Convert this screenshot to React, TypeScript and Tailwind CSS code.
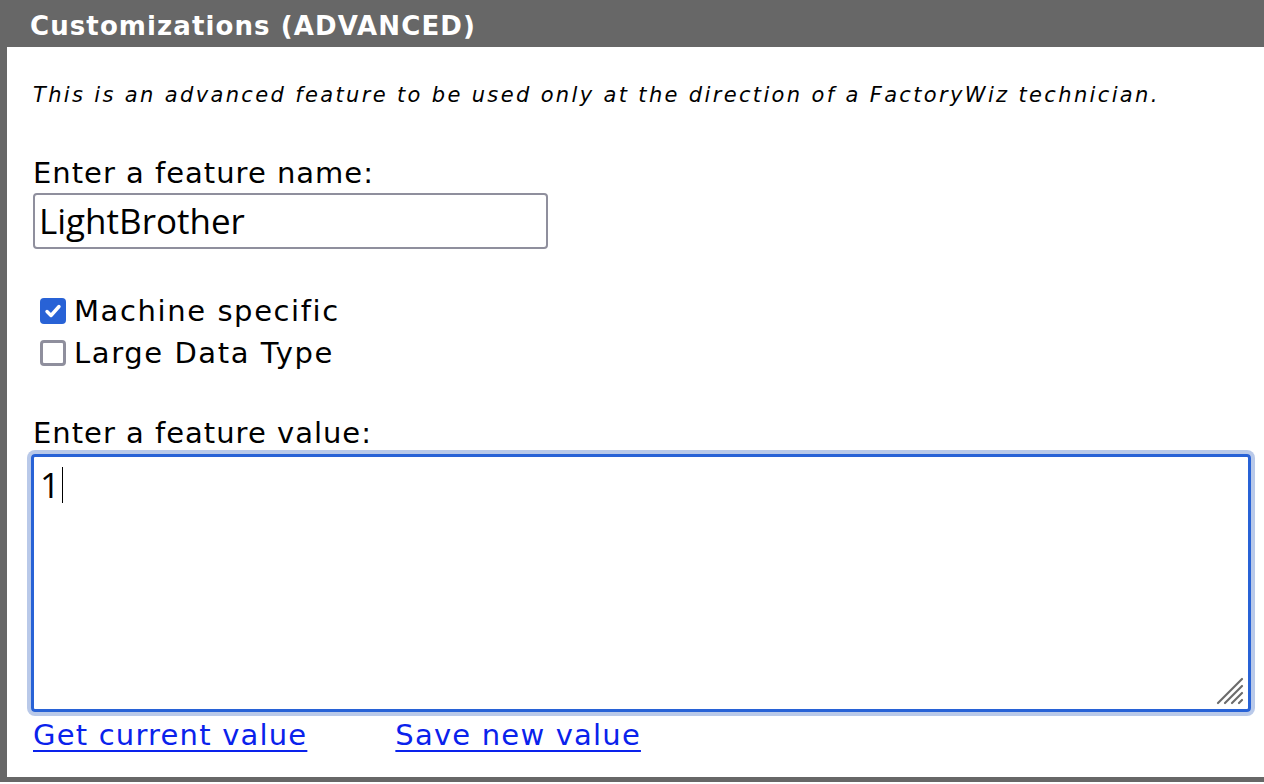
import React from "react";

const gothic = { fontFamily: '"DejaVu Sans", "Liberation Sans", sans-serif' };
const field = { fontFamily: '"Open Sans", "Noto Sans", sans-serif' };

function CheckRow({ checked, label }: { checked: boolean; label: string }) {
  return (
    <div className="flex h-[42px] items-center pl-[7px]">
      {checked ? (
        <div className="flex h-[26px] w-[26px] items-center justify-center rounded-[4px] bg-[#2862d6]">
          <svg width="20" height="20" viewBox="0 0 20 20" fill="none">
            <path d="M4 10.5l4 4 8-9" stroke="#fff" strokeWidth="3.4" strokeLinecap="round" strokeLinejoin="round" />
          </svg>
        </div>
      ) : (
        <div className="h-[26px] w-[26px] rounded-[4px] border-[3px] border-[#8f8f9d] bg-white" />
      )}
      <span className="ml-[8px] text-[29px] leading-[34px] tracking-[1.6px] text-black" style={gothic}>
        {label}
      </span>
    </div>
  );
}

export default function App() {
  return (
    <div className="h-[784px] w-[1264px] overflow-hidden bg-white">
      <div className="flex h-[782px] w-[1290px] flex-col border-b-[5px] border-l-[7px] border-[#676767]">
        <div className="flex h-[47px] shrink-0 items-center bg-[#676767] pl-[23px] pt-[4px]">
          <span className="text-[26px] font-bold leading-[30px] tracking-[1.1px] text-white" style={gothic}>
            Customizations (ADVANCED)
          </span>
        </div>

        <div className="flex flex-col pl-[26px]">
          <p className="mt-[33px] text-[21px] italic leading-[30px] tracking-[2.35px] text-black" style={gothic}>
            This is an advanced feature to be used only at the direction of a FactoryWiz technician.
          </p>

          <label className="mt-[46px] text-[29px] leading-[34px] tracking-[1px] text-black" style={gothic}>
            Enter a feature name:
          </label>
          <div className="mt-[3px] flex h-[56px] w-[515px] items-center rounded-[4px] border-2 border-[#8f8f9d] pl-[4px]">
            <span className="text-[35px] leading-[40px] text-black" style={field}>
              LightBrother
            </span>
          </div>

          <div className="mt-[41px] flex flex-col">
            <CheckRow checked label="Machine specific" />
            <CheckRow checked={false} label="Large Data Type" />
          </div>

          <label className="mt-[42px] text-[29px] leading-[34px] tracking-[1px] text-black" style={gothic}>
            Enter a feature value:
          </label>
          <div className="relative ml-[-2px] mt-[4px] h-[258px] w-[1220px] rounded-[4px] border-[3px] border-[#2862d6] shadow-[0_0_0_4px_#b9c9e9]">
            <div className="flex items-center pl-[6px] pt-[8px]">
              <span className="text-[35px] leading-[40px] text-black" style={field}>
                1
              </span>
              <span className="ml-[2px] h-[36px] w-px bg-black" />
            </div>
            <svg className="absolute bottom-[3px] right-[3px]" width="30" height="30" viewBox="0 0 30 30">
              <g stroke="#6b6b6b" strokeWidth="2.2" strokeLinecap="round">
                <line x1="3" y1="27" x2="27" y2="3" />
                <line x1="10" y1="27" x2="27" y2="10" />
                <line x1="17" y1="27" x2="27" y2="17" />
                <line x1="24" y1="27" x2="27" y2="24" />
              </g>
            </svg>
          </div>

          <div className="mt-[6px] flex text-[29px] leading-[34px] tracking-[1.2px]" style={gothic}>
            <a href="#" className="text-[#0a22ec] underline underline-offset-[5px]">
              Get current value
            </a>
            <a href="#" className="ml-[88px] text-[#0a22ec] underline underline-offset-[5px]">
              Save new value
            </a>
          </div>
        </div>
      </div>
    </div>
  );
}
